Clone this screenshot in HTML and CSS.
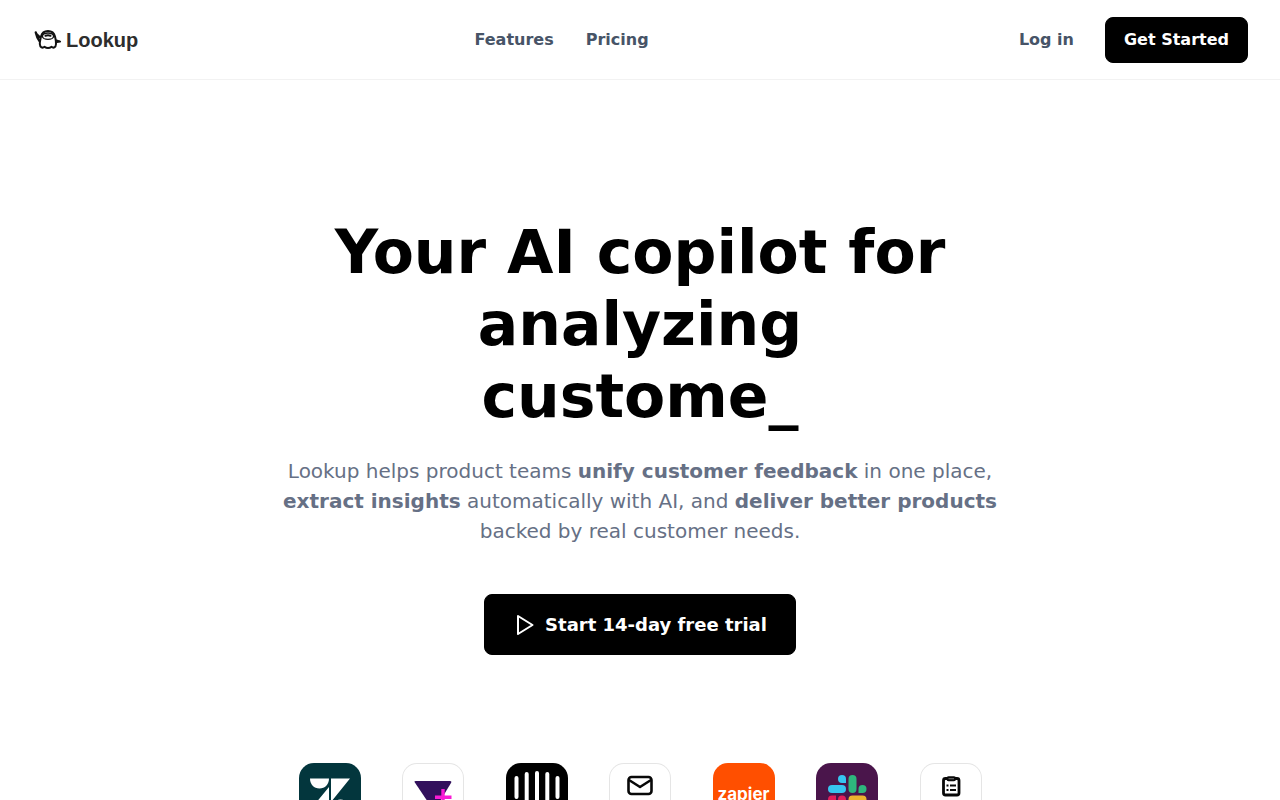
FILE: index.html
```html
<!DOCTYPE html>
<html lang="en">
<head>
<meta charset="utf-8">
<meta name="viewport" content="width=device-width, initial-scale=1">
<title>Lookup</title>
<link rel="stylesheet" href="styles.css">
</head>
<body>
<header class="header">
  <a class="brand" href="#">
    <svg class="brand-mark" viewBox="0 0 28 22" fill="none" stroke="#111" stroke-linecap="round" stroke-linejoin="round">
      <path d="M7 7.500C8 3.500 10.500 2 14 2S20 3.500 21 7.500C21.500 10 22.200 12 22 15C21.800 18.500 19.500 19.500 17.500 17.800Q14 20 10.500 17.800C8.500 19.500 6 18.500 5.800 15C5.800 12 6.500 10 7 7.500Z" stroke-width="2"/>
      <path d="M1.800 3.500C2.500 6.500 3.500 9.500 5.500 12M2.500 5L5.500 8" stroke-width="2.400"/>
      <path d="M22.500 11.300L26.200 12.500L22.800 13.200" stroke-width="1.800"/>
      <ellipse cx="14" cy="7.200" rx="5.600" ry="3.200" stroke-width="1.400"/>
      <path d="M11.500 6.800Q14 5.800 16.500 6.800" stroke-width="2"/>
    </svg>
    <span>Lookup</span>
  </a>
  <nav class="nav">
    <a href="#features">Features</a>
    <a href="#pricing">Pricing</a>
  </nav>
  <div class="actions">
    <a class="login" href="#login">Log in</a>
    <button class="button" type="button">Get Started</button>
  </div>
</header>
<main class="hero">
  <h1 class="title">Your AI copilot for analyzing<br>custome_</h1>
  <p class="lead">Lookup helps product teams <strong>unify customer feedback</strong> in one place, <strong>extract insights</strong> automatically with AI, and <strong>deliver better products</strong> backed by real customer needs.</p>
  <button class="button button-large" type="button">
    <svg class="play" viewBox="0 0 24 24" fill="none" stroke="#fff" stroke-width="2" stroke-linejoin="round"><path d="M5 3L19.500 12L5 21Z"/></svg>
    Start 14-day free trial
  </button>
  <ul class="tools">
    <li class="tile zendesk">
      <svg viewBox="0 0 62 62" fill="#fff"><path d="M11 15.500H30C30 21.500 26 25.500 20.500 25.500S11 21.500 11 15.500ZM32 15.500H51L32 39ZM30 24V47H11ZM32 47C32 40 36 36.500 41.500 36.500S51 40 51 47Z"/></svg>
    </li>
    <li class="tile outlined">
      <svg viewBox="0 0 62 62"><path d="M12.500 19Q12 18 14 18H48Q50 18 49 20L32 48Z" fill="#32105c"/><path d="M41 26V43M33 34.300H49.500" stroke="#f91bd5" stroke-width="3.400"/></svg>
    </li>
    <li class="tile intercom">
      <svg viewBox="0 0 62 62" fill="none" stroke="#fff" stroke-width="4" stroke-linecap="round"><path d="M10.500 15V34M20.700 11V38M31 10V39M41.300 11V38M51.500 15V34M11 46Q31 61 51 46"/></svg>
    </li>
    <li class="tile outlined">
      <svg viewBox="0 0 62 62" fill="none" stroke="#080808" stroke-width="2.600" stroke-linejoin="round"><rect x="19.500" y="14" width="23" height="17" rx="3"/><path d="M20 17L31 24L42 17"/></svg>
    </li>
    <li class="tile zapier"><span>zapier</span></li>
    <li class="tile slack">
      <svg viewBox="0 0 62 62" stroke-width="8" stroke-linecap="round"><g stroke="#36c5f0" fill="#36c5f0"><path d="M16 26H26"/><path d="M30 20H26A4 4 0 1 1 30 16Z" stroke="none"/></g><g stroke="#2eb67d" fill="#2eb67d"><path d="M36.500 16V26"/><path d="M42.500 30V26A4 4 0 1 1 46.500 30Z" stroke="none"/></g><g stroke="#ecb22e" fill="#ecb22e"><path d="M36.500 36.500H46.500"/><path d="M32.500 43H36.500A4 4 0 1 1 32.500 47Z" stroke="none"/></g><g stroke="#e01e5a" fill="#e01e5a"><path d="M26 36.500V46.500"/><path d="M20 32.500V36.500A4 4 0 1 1 16 32.500Z" stroke="none"/></g></svg>
    </li>
    <li class="tile outlined">
      <svg viewBox="0 0 62 62" fill="none" stroke="#080808" stroke-width="2.800"><rect x="23.500" y="15.500" width="15.500" height="16.500" rx="2"/><rect x="27.500" y="14.300" width="7.500" height="3" rx="1" fill="#777" stroke-width="2"/><path d="M26.500 22.500H28.500M30 22.500H36M26.500 27H28.500M30 27H36" stroke-width="2"/></svg>
    </li>
  </ul>
</main>
</body>
</html>
```
FILE: styles.css
```css
* {
  box-sizing: border-box;
}

body {
  margin: 0;
  background: #fff;
  font-family: "DejaVu Sans", sans-serif;
  color: #000;
}

a {
  color: inherit;
  text-decoration: none;
}

.header {
  display: flex;
  align-items: center;
  height: 80px;
  padding: 0 32px;
  border-bottom: 1px solid #f2f2f2;
  color: #475467;
  font-size: 16px;
  font-weight: 700;
  line-height: 24px;
}

.brand {
  display: flex;
  align-items: center;
  gap: 4px;
  padding-left: 2px;
  color: #2d2d2d;
  font-family: "Liberation Sans", Arial, sans-serif;
  font-size: 20px;
}

.brand-mark {
  width: 28px;
  height: 22px;
}

.nav {
  display: flex;
  gap: 32px;
  margin: 0 auto;
  padding-right: 34px;
}

.actions {
  display: flex;
  align-items: center;
  gap: 31px;
}

.button {
  display: inline-flex;
  align-items: center;
  justify-content: center;
  gap: 8px;
  padding: 10px 18px;
  border: 1px solid #000;
  border-radius: 8px;
  background: #000;
  color: #fff;
  font: inherit;
  font-weight: 700;
  cursor: pointer;
}

.button-large {
  padding: 16px 28px;
  font-size: 18px;
  line-height: 27px;
}

.play {
  width: 24px;
  height: 24px;
}

.hero {
  display: flex;
  flex-direction: column;
  align-items: center;
  max-width: 768px;
  margin: 0 auto;
  padding: 136px 16px 0;
  text-align: center;
}

.title {
  margin: 0 0 24px;
  font-size: 60px;
  font-weight: 700;
  line-height: 72px;
}

.lead {
  margin: 0 0 48px;
  color: #667085;
  font-size: 20px;
  line-height: 30px;
}

.tools {
  display: flex;
  justify-content: space-between;
  width: 100%;
  max-width: 683px;
  margin: 108px 0 0;
  padding: 0;
  list-style: none;
}

.tile {
  display: grid;
  place-items: center;
  width: 62px;
  height: 62px;
  border-radius: 15px;
  overflow: hidden;
}

.tile svg {
  width: 62px;
  height: 62px;
}

.outlined {
  box-shadow: inset 0 0 0 1px #e5e5e5;
}

.zendesk {
  background: #03363d;
}

.intercom {
  background: #000;
}

.zapier {
  background: #ff4f00;
  color: #fff;
  font-family: Inter, sans-serif;
  font-size: 17px;
  font-weight: 700;
  line-height: 20px;
}

.slack {
  background: #4a154b;
}
```
